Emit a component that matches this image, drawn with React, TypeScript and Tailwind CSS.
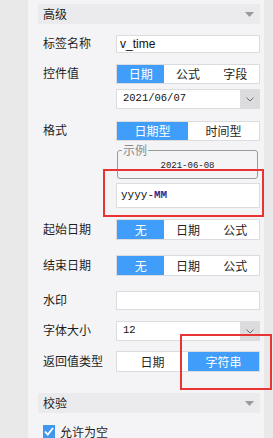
import React from "react";

const cjk = { fontFamily: '"Noto Sans CJK SC", "Noto Sans", sans-serif' };
const mono = { fontFamily: '"Liberation Mono", "DejaVu Sans Mono", monospace' };

function SectionHeader({ title, className = "" }: { title: string; className?: string }) {
  return (
    <div className={`flex h-[20px] items-center justify-between bg-[#ebebed] pl-[5px] pr-[6px] ${className}`}>
      <span className="text-[12px] leading-none text-[#1f1f1f]">{title}</span>
      <svg width="9" height="5" viewBox="0 0 9 5">
        <path d="M0 0h9L4.5 5z" fill="#9a9a9a" />
      </svg>
    </div>
  );
}

function Row({ label, className = "", children }: { label: string; className?: string; children: React.ReactNode }) {
  return (
    <div className={`flex items-center ${className}`}>
      <div className="w-[78px] shrink-0 pl-[5px] text-[12px] leading-none text-[#1f1f1f] -mt-[2px]">{label}</div>
      <div className="w-[144px]">{children}</div>
    </div>
  );
}

function Segmented({ items, active, h = "h-[21px]" }: { items: string[]; active: number; h?: string }) {
  return (
    <div className={`flex ${h} border border-[#dcdcdf] bg-white`}>
      {items.map((it, i) => (
        <div
          key={it}
          className={`flex flex-1 items-center justify-center text-[12px] leading-none ${
            i === active ? "bg-[#409dfa] text-white" : "text-[#1f1f1f]"
          }`}
        >
          {it}
        </div>
      ))}
    </div>
  );
}

function Select({ value, h = "h-[20px]" }: { value: string; h?: string }) {
  return (
    <div className={`flex ${h} border border-[#dcdcdf] bg-white`}>
      <div className="flex flex-1 items-center pl-[6px] text-[10.5px] text-[#111]" style={mono}>
        {value}
      </div>
      <div className="flex w-[19px] items-center justify-center bg-[#dcdcdf]">
        <svg width="8" height="5" viewBox="0 0 8 5">
          <path d="M0.5 0.5L4 4L7.5 0.5" fill="none" stroke="#6b6b6b" strokeWidth="1" />
        </svg>
      </div>
    </div>
  );
}

export default function App() {
  return (
    <div className="relative flex h-[438px] w-[273px] overflow-hidden bg-[#f4f4f6]" style={cjk}>
      <div className="w-[28px] shrink-0 bg-[#e9e9e9]" />
      <div className="flex flex-1 flex-col pl-[10px] pr-[4px] pt-[4px]">
        <SectionHeader title="高级" />

        <Row label="标签名称" className="mt-[11px]">
          <div className="flex h-[18px] items-center border border-[#dcdcdf] bg-white pl-[3px] text-[12px] text-[#111]" style={{ fontFamily: '"Liberation Sans", sans-serif' }}>
            v_time
          </div>
        </Row>

        <Row label="控件值" className="mt-[11px]">
          <Segmented items={["日期", "公式", "字段"]} active={0} h="h-[20px]" />
        </Row>
        <div className="ml-[78px] mt-[5px] w-[144px]">
          <Select value="2021/06/07" />
        </div>

        <Row label="格式" className="mt-[12px]">
          <Segmented items={["日期型", "时间型"]} active={0} h="h-[20px]" />
        </Row>
        <div className="ml-[79px] mt-[3px] w-[141px]">
          <fieldset className="h-[35px] rounded-[3px] border border-[#9b9b9b] px-[4px]">
            <legend className="px-[1px] text-[12px] leading-[12px] text-[#8a8a8a]">示例</legend>
            <div className="mt-[6px] text-center text-[9px] leading-none text-[#222]" style={mono}>
              2021-06-08
            </div>
          </fieldset>
        </div>
        <div className="ml-[78px] mt-[4px] w-[144px]">
          <div className="flex h-[25px] items-center border border-[#dcdcdf] bg-white pl-[4px] text-[11px] text-[#111]" style={mono}>
            yyyy-<span className="font-bold text-[#3a2a8a]">MM</span>
          </div>
        </div>

        <Row label="起始日期" className="mt-[11px]">
          <Segmented items={["无", "日期", "公式"]} active={0} />
        </Row>
        <Row label="结束日期" className="mt-[15px]">
          <Segmented items={["无", "日期", "公式"]} active={0} />
        </Row>
        <Row label="水印" className="mt-[15px]">
          <div className="h-[19px] border border-[#dcdcdf] bg-white" />
        </Row>
        <Row label="字体大小" className="mt-[11px]">
          <Select value="12" />
        </Row>
        <Row label="返回值类型" className="mt-[10px]">
          <Segmented items={["日期", "字符串"]} active={1} />
        </Row>

        <SectionHeader title="校验" className="mt-[21px]" />

        <div className="mt-[12px] flex items-center pl-[5px]">
          <div className="flex h-[13px] w-[12px] items-center justify-center bg-[#3f98ee]">
            <svg width="10" height="9" viewBox="0 0 10 9">
              <path d="M1 4.5L3.8 7.5L9 1" fill="none" stroke="white" strokeWidth="1.8" />
            </svg>
          </div>
          <span className="ml-[5px] text-[12px] leading-none text-[#1f1f1f]">允许为空</span>
        </div>
      </div>
      <div className="w-[9px] shrink-0 bg-[#e9e9e9]" />

      <div className="absolute left-[103px] top-[169px] h-[48px] w-[161px] border-2 border-[#e93434]" />
      <div className="absolute left-[180px] top-[334px] h-[56px] w-[92px] border-2 border-[#e93434]" />
    </div>
  );
}
